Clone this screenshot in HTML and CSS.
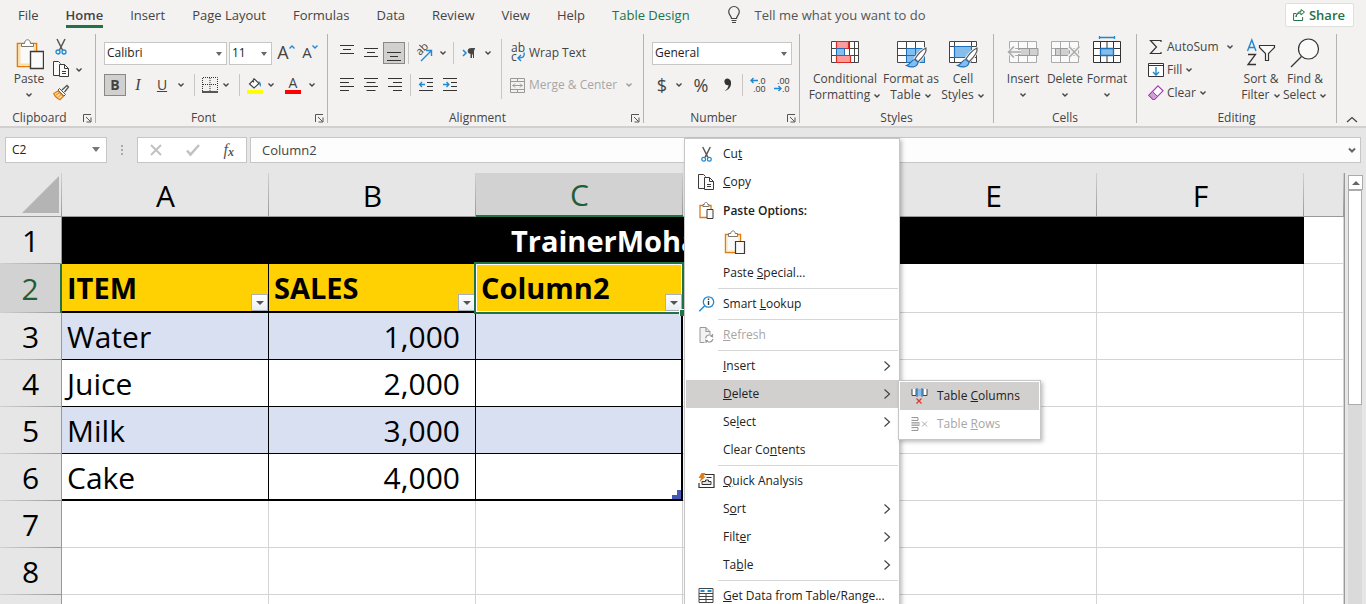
FILE: index.html
```html
<!DOCTYPE html>
<html lang="en">
<head>
<meta charset="utf-8">
<title>Workbook</title>
<link rel="stylesheet" href="styles.css">
</head>
<body>
<svg class="defs" aria-hidden="true">
  <symbol id="chev" viewBox="0 0 8 6"><path d="M1.5 1.5 4 4l2.5-2.5" fill="none" stroke="#444" stroke-width="1.4"/></symbol>
  <symbol id="launch" viewBox="0 0 9 9"><path d="M.5 8V.5H8M3 3l4.500 4.500M8 3.500V8H3.500" fill="none" stroke="#555"/></symbol>
  <symbol id="cut" viewBox="0 0 14 18"><path d="M3 1l5.500 11M11 1L5.500 12" fill="none" stroke="#555" stroke-width="1.500"/><circle cx="4" cy="14" r="2" fill="none" stroke="#1e88d2" stroke-width="1.300"/><circle cx="10" cy="14" r="2" fill="none" stroke="#1e88d2" stroke-width="1.300"/></symbol>
  <symbol id="copy" viewBox="0 0 17 17"><path d="M6 14.500H.5v-14h5l2 2" fill="#fafafa" stroke="#3b3a39"/><path d="M6.500 3.500h5l4 4v8h-9z" fill="#fafafa" stroke="#3b3a39"/><path d="M11.500 3.500v4h4M9 10.500h4M9 12.500h4" fill="none" stroke="#3b3a39"/></symbol>
  <symbol id="paste" viewBox="-2 0 30 32"><path d="M1.500 5.500h19v23h-19z" fill="#fff" stroke="#e07c13" stroke-width="1.600"/><path d="M3.500 7.500h15v19h-15z" fill="#fafafa" stroke="#fbe0a4" stroke-width="2"/><path d="M5.500 8.500v-3h3c0-5 6-5 6 0h3v3z" fill="#fff" stroke="#797774"/><path d="M14.500 13.500h13v17h-13z" fill="#fafafa" stroke="#3b3a39" stroke-width="1.400"/></symbol>
  <symbol id="paste-small" viewBox="0 0 16 17"><path d="M1.500 3.500h11v12h-11z" fill="#fff" stroke="#e07c13" stroke-width="1.300"/><path d="M4.500 4.500v-2h1.300c0-3 3.400-3 3.400 0h1.300v2z" fill="#fff" stroke="#797774"/><path d="M8.500 7.500h6v9h-6z" fill="#fafafa" stroke="#3b3a39"/></symbol>
  <symbol id="paste-mid" viewBox="0 0 22 25"><path d="M1.500 4.500h15v18h-15z" fill="#fff" stroke="#e07c13" stroke-width="1.400"/><path d="M3 6h12v15H3z" fill="#fafafa" stroke="#fbe0a4"/><path d="M4.500 6.500v-3h2.300c0-3.500 4.400-3.500 4.400 0h2.300v3z" fill="#fff" stroke="#797774"/><path d="M11.500 11.500h9v12h-9z" fill="#fafafa" stroke="#3b3a39" stroke-width="1.200"/></symbol>
  <symbol id="arrow" viewBox="0 0 8 10"><path d="M1.500 .5 6.500 5l-5 4.500" fill="none" stroke="#444" stroke-width="1.200"/></symbol>
</svg>

<header class="ribbon">
  <div class="topbar">
    <nav class="tabs">
      <a href="#">File</a><a href="#" class="on">Home</a><a href="#">Insert</a><a href="#">Page Layout</a><a href="#">Formulas</a><a href="#">Data</a><a href="#">Review</a><a href="#">View</a><a href="#">Help</a><a href="#" class="ctx">Table Design</a>
    </nav>
    <button class="tell"><svg width="12" height="18" viewBox="0 0 12 18"><path d="M3.500 12.500C3.500 10 .7 9 .7 5.800a5.300 5.300 0 0 1 10.600 0C11.300 9 8.500 10 8.500 12.500zM3.500 14.500h5M4 16.500h4" fill="none" stroke="#444" stroke-width="1.200"/></svg>Tell me what you want to do</button>
    <button class="share"><svg width="12" height="12" viewBox="0 0 12 12"><path d="M3 4.500H.6v7h9V8M3 8c.5-3 2-4 5-4V6l3.500-3L8 .6v2C5 2.600 3 4.500 3 8z" fill="none" stroke="#217346"/></svg>Share</button>
  </div>

  <div class="groups">
    <section class="group clipboard">
      <div class="body">
        <button class="big paste"><svg width="30" height="32"><use href="#paste"/></svg><span>Paste</span><svg class="chev"><use href="#chev"/></svg></button>
        <div class="stack">
          <button aria-label="Cut" class="cut"><svg width="14" height="18"><use href="#cut"/></svg></button>
          <button aria-label="Copy"><svg width="17" height="17"><use href="#copy"/></svg><svg class="chev"><use href="#chev"/></svg></button>
          <button aria-label="Format Painter"><svg width="17" height="17" viewBox="0 0 17 17"><path d="M9 6l5-4.500 1.500 1.500L11.500 8" fill="#fff" stroke="#555" stroke-width="1.300"/><path d="M6.500 4.500l6 6-1.500 1.500-6-6z" fill="#fff" stroke="#555"/><path d="M5 7L.8 9.500c1 3 3.500 5 6.200 6.200l3.500-3.400z" fill="#fbdda0" stroke="#e07c13" stroke-width="1.300"/><path d="M3 11l3-2M5 13.500l3-3" stroke="#e07c13"/></svg></button>
        </div>
      </div>
      <footer><span>Clipboard</span><button aria-label="Clipboard options"><svg width="9" height="9"><use href="#launch"/></svg></button></footer>
    </section>

    <section class="group font">
      <div class="body rows">
        <div class="row">
          <label class="drop w-name"><select aria-label="Font"><option>Calibri</option></select></label>
          <label class="drop w-size"><select aria-label="Font size"><option>11</option></select></label>
          <button class="ib grow" aria-label="Increase font size"><span>A</span><svg width="6" height="4" viewBox="0 0 6 4"><path d="M.5 3.500 3 1l2.500 2.500" fill="none" stroke="#1e88d2" stroke-width="1.300"/></svg></button>
          <button class="ib shrink" aria-label="Decrease font size"><span>A</span><svg width="6" height="4" viewBox="0 0 6 4"><path d="M.5 .5 3 3 5.500 .5" fill="none" stroke="#1e88d2" stroke-width="1.300"/></svg></button>
        </div>
        <div class="row">
          <button class="ib pressed"><b>B</b></button>
          <button class="ib italic"><i>I</i></button>
          <button class="ib"><u>U</u></button>
          <button class="cb" aria-label="Underline styles"><svg class="chev"><use href="#chev"/></svg></button>
          <i class="vsep"></i>
          <button class="ib tight" aria-label="Borders"><svg width="16" height="16" viewBox="0 0 16 16"><path d="M.5 14V.5h15V14M8 1v13M1 7.500h14" fill="none" stroke="#333" stroke-dasharray="1 1"/><path d="M0 15h16" stroke="#222" stroke-width="1.500"/></svg></button>
          <button class="cb" aria-label="Border styles"><svg class="chev"><use href="#chev"/></svg></button>
          <i class="vsep"></i>
          <button class="ib tight" aria-label="Fill color"><svg width="18" height="18" viewBox="0 0 18 18"><path d="M7.500 2.500v4M3.500 8l5-5 4.500 4.500-5 4.500z" fill="#fff" stroke="#444" stroke-width="1.200"/><path d="M12.500 5c2.500 1 3 3.500 2 6-1-2-1.500-3-2-6z" fill="#1e88d2"/><path d="M1 14h16v4H1z" fill="#ff0"/></svg></button>
          <button class="cb" aria-label="Fill colors"><svg class="chev"><use href="#chev"/></svg></button>
          <button class="ib color" aria-label="Font color"><span>A</span></button>
          <button class="cb" aria-label="Font colors"><svg class="chev"><use href="#chev"/></svg></button>
        </div>
      </div>
      <footer><span>Font</span><button aria-label="Font options"><svg width="9" height="9"><use href="#launch"/></svg></button></footer>
    </section>

    <section class="group align">
      <div class="body">
        <div class="rows">
          <div class="row">
            <button class="ib" aria-label="Top align"><svg width="14" height="16" viewBox="0 0 14 16"><path d="M0 .5h14M3 4.500h8M0 8.500h14" stroke="#333" stroke-width="1.200"/></svg></button>
            <button class="ib" aria-label="Middle align"><svg width="14" height="16" viewBox="0 0 14 16"><path d="M0 3.500h14M3 7.500h8M0 11.500h14" stroke="#333" stroke-width="1.200"/></svg></button>
            <button class="ib pressed" aria-label="Bottom align"><svg width="14" height="16" viewBox="0 0 14 16"><path d="M0 7.500h14M3 11.500h8M0 15.500h14" stroke="#333" stroke-width="1.200"/></svg></button>
            <i class="vsep"></i>
            <button class="ib" aria-label="Orientation"><svg width="18" height="18" viewBox="0 0 18 18"><text x="0" y="0" font-size="11" fill="#444" transform="translate(5 12) rotate(-45)">ab</text><path d="M6 17L16 7M11 6.500h5.500V12" fill="none" stroke="#1e88d2" stroke-width="1.400"/></svg></button>
            <button class="cb" aria-label="Orientation styles"><svg class="chev"><use href="#chev"/></svg></button>
            <i class="vsep"></i>
            <button class="ib" aria-label="Text direction"><svg width="14" height="10" viewBox="0 0 14 10"><path d="M1 2l3 3-3 3" fill="none" stroke="#1e88d2" stroke-width="1.500"/><path d="M13 .6H8.500a2.300 2.300 0 0 0 0 4.800H9V10M9.500 1v9M11.500 1v9" fill="#444" stroke="#444"/></svg></button>
            <button class="cb" aria-label="Text directions"><svg class="chev"><use href="#chev"/></svg></button>
          </div>
          <div class="row">
            <button class="ib" aria-label="Align left"><svg width="14" height="14" viewBox="0 0 14 14"><path d="M0 .5h14M0 4.500h9M0 8.500h14M0 12.500h9" stroke="#333" stroke-width="1.200"/></svg></button>
            <button class="ib" aria-label="Center"><svg width="14" height="14" viewBox="0 0 14 14"><path d="M0 .5h14M2.500 4.500h9M0 8.500h14M2.500 12.500h9" stroke="#333" stroke-width="1.200"/></svg></button>
            <button class="ib" aria-label="Align right"><svg width="14" height="14" viewBox="0 0 14 14"><path d="M0 .5h14M5 4.500h9M0 8.500h14M5 12.500h9" stroke="#333" stroke-width="1.200"/></svg></button>
            <i class="vsep"></i>
            <button class="ib" aria-label="Decrease indent"><svg width="14" height="14" viewBox="0 0 14 14"><path d="M0 .5h14M8 4.500h6M8 8.500h6M0 12.500h14" stroke="#333" stroke-width="1.200"/><path d="M6 6.500H.8M3 4L.6 6.500 3 9" fill="none" stroke="#1e88d2" stroke-width="1.300"/></svg></button>
            <button class="ib" aria-label="Increase indent"><svg width="14" height="14" viewBox="0 0 14 14"><path d="M0 .5h14M8 4.500h6M8 8.500h6M0 12.500h14" stroke="#333" stroke-width="1.200"/><path d="M0 6.500h5.500M3.500 4l2.400 2.500L3.500 9" fill="none" stroke="#1e88d2" stroke-width="1.300"/></svg></button>
          </div>
        </div>
        <i class="vline"></i>
        <div class="rows wrap">
          <button class="tb"><svg width="15" height="18" viewBox="0 0 15 18"><text x="1" y="8" font-size="12" fill="#444">ab</text><text x="1" y="17" font-size="12" fill="#444">c</text><path d="M14 8.500c1 4-1 5.500-5.500 5.500M11 11l-3 3 3 3" fill="none" stroke="#1e88d2" stroke-width="1.400"/></svg>Wrap Text</button>
          <button class="tb" disabled><svg width="15" height="15" viewBox="0 0 15 15"><path d="M.5 .5h14v14H.5zM.5 3.500h14M.5 11.500h14M7.500 .5v3M7.500 11.500v3M2.500 7.500h10M5 5.500l-2 2 2 2M10 5.500l2 2-2 2" fill="none" stroke="#999"/></svg>Merge &amp; Center <svg class="chev dim"><use href="#chev"/></svg></button>
        </div>
      </div>
      <footer><span>Alignment</span><button aria-label="Alignment options"><svg width="9" height="9"><use href="#launch"/></svg></button></footer>
    </section>

    <section class="group number">
      <div class="body rows">
        <div class="row"><label class="drop w-num"><select aria-label="Number format"><option>General</option></select></label></div>
        <div class="row">
          <button class="ib sym">$</button>
          <button class="cb" aria-label="Currency styles"><svg class="chev"><use href="#chev"/></svg></button>
          <button class="ib sym pct">%</button>
          <button class="ib comma" aria-label="Comma style"><svg width="9" height="14" viewBox="0 0 9 14"><path d="M4 .5A3 3 0 1 0 5.500 7C5.300 9.500 4 11.500 1.500 13 6 12 8.500 8.500 8 4 7.700 2 6 .5 4 .5z" fill="#333"/></svg></button>
          <i class="vsep"></i>
          <button class="ib dec" aria-label="Increase decimal"><svg width="16" height="16" viewBox="0 0 16 16"><path d="M8 3.500H1M3.500 1L1 3.500 3.500 6" fill="none" stroke="#1e88d2" stroke-width="1.400"/><text x="8" y="7">.0</text><text x="3" y="15">.00</text></svg></button>
          <button class="ib dec" aria-label="Decrease decimal"><svg width="16" height="16" viewBox="0 0 16 16"><path d="M0 11.500h7M4.500 9L7 11.500 4.500 14" fill="none" stroke="#1e88d2" stroke-width="1.400"/><text x="3" y="7">.00</text><text x="8" y="15">.0</text></svg></button>
        </div>
      </div>
      <footer><span>Number</span><button aria-label="Number options"><svg width="9" height="9"><use href="#launch"/></svg></button></footer>
    </section>

    <section class="group styles">
      <div class="body">
        <button class="big w-cond"><svg width="30" height="32" viewBox="0 0 30 32"><path d="M1.500 3.500h27v21h-27zM1.500 10.500h27M1.500 17.500h27M6.500 3.500v21M19.500 3.500v21M24.500 3.500v21" fill="#fff" stroke="#444"/><path d="M6.500 3.500h12v7h-12zM6.500 17.500h14v7h-14z" fill="#ff9a9a" stroke="#d92c20" stroke-width="1.200"/><path d="M6.500 10.500h8v7h-8z" fill="#83beec" stroke="#1e6fb8"/></svg><span>Conditional<br>Formatting <svg class="chev"><use href="#chev"/></svg></span></button>
        <button class="big w-fmt"><svg width="30" height="32" viewBox="0 0 30 32"><path d="M1.500 3.500h27v21h-27z" fill="#fff"/><path d="M10.500 10.500h18v14h-18z" fill="#83beec"/><path d="M1.500 3.500h27v21h-27zM1.500 10.500h27M1.500 17.500h27M10.500 3.500v21M19.500 3.500v21" fill="none" stroke="#444"/><path d="M10.500 10.500h18v14h-18zM10.500 17.500h18M19.500 10.500v14" fill="none" stroke="#1e6fb8"/><svg x="9" y="9" width="22" height="22" viewBox="0 0 22 22"><path d="M21 1c-4 2-8 6-11 11l3 3C17 11 22 5 21 1z" fill="#fff" stroke="#f3f2f1" stroke-width="3"/><path d="M21 1c-4 2-8 6-11 11l3 3C17 11 22 5 21 1z" fill="#fff" stroke="#555" stroke-width="1.200"/><path d="M10 12.500c-4 0-4 5-8.500 6 5 2.500 11 2 11.500-3.500z" fill="#83beec" stroke="#1e6fb8" stroke-width="1.200"/></svg></svg><span>Format as<br>Table <svg class="chev"><use href="#chev"/></svg></span></button>
        <button class="big w-cell"><svg width="30" height="32" viewBox="0 0 30 32"><path d="M1.500 3.500h27v21h-27zM1.500 8.500h27M1.500 19.500h27M6.500 3.500v21M23.500 3.500v21" fill="#fff" stroke="#444"/><path d="M6.500 8.500h17v11h-17z" fill="#83beec" stroke="#1e6fb8" stroke-width="1.200"/><svg x="8" y="9" width="22" height="22" viewBox="0 0 22 22"><path d="M21 1c-4 2-8 6-11 11l3 3C17 11 22 5 21 1z" fill="#fff" stroke="#f3f2f1" stroke-width="3"/><path d="M21 1c-4 2-8 6-11 11l3 3C17 11 22 5 21 1z" fill="#fff" stroke="#555" stroke-width="1.200"/><path d="M10 12.500c-4 0-4 5-8.500 6 5 2.500 11 2 11.500-3.500z" fill="#83beec" stroke="#1e6fb8" stroke-width="1.200"/></svg></svg><span>Cell<br>Styles <svg class="chev"><use href="#chev"/></svg></span></button>
      </div>
      <footer><span>Styles</span></footer>
    </section>

    <section class="group cells">
      <div class="body">
        <button class="big w-ins"><svg width="32" height="32" viewBox="0 0 32 32"><path d="M2.500 3.500h27v21h-27zM2.500 10.500h27M2.500 17.500h27M11.500 3.500v21M20.500 3.500v21" fill="#fafafa" stroke="#aaa"/><path d="M12 10.500h19v7H12zM22.500 10.500v7" fill="#d0d0d0" stroke="#999"/><path d="M14 14H2M7 9l-5 5 5 5" fill="none" stroke="#f3f2f1" stroke-width="4"/><path d="M14 14H1.500M7 8.500L1.500 14 7 19.500" fill="none" stroke="#aaa" stroke-width="1.500"/></svg><span>Insert</span><svg class="chev"><use href="#chev"/></svg></button>
        <button class="big w-ins"><svg width="32" height="32" viewBox="0 0 32 32"><path d="M2.500 3.500h27v21h-27zM2.500 10.500h27M2.500 17.500h27M11.500 3.500v21M20.500 3.500v21" fill="#fafafa" stroke="#aaa"/><path d="M6.500 10.500h14v7h-14zM11.500 10.500v7" fill="#d0d0d0" stroke="#999"/><path d="M20 9l10 10M30 9L20 19" fill="none" stroke="#f3f2f1" stroke-width="4"/><path d="M20 8.500L30.500 19.500M30.500 8.500L20 19.500" fill="none" stroke="#aaa" stroke-width="1.400"/></svg><span>Delete</span><svg class="chev"><use href="#chev"/></svg></button>
        <button class="big w-ins"><svg width="30" height="32" viewBox="0 0 30 32"><path d="M1.500 3.500h27v21h-27zM1.500 10.500h27M1.500 17.500h27M8.500 3.500v21M21.500 3.500v21M15 3.500v21" fill="#fff" stroke="#333"/><path d="M8.500 10.500h13v7h-13z" fill="#83beec" stroke="#1e6fb8" stroke-width="1.300"/><path d="M7.500 -.5h15M7.500 -2v3M22.500 -2v3" fill="none" stroke="#1e88d2" stroke-width="1.300"/></svg><span>Format</span><svg class="chev"><use href="#chev"/></svg></button>
      </div>
      <footer><span>Cells</span></footer>
    </section>

    <section class="group editing">
      <div class="body">
        <div class="stack text">
          <button><svg width="16" height="16" viewBox="0 0 16 16"><path d="M13 3V1.500H2.500L8.500 8l-6 6.500H13V13" fill="none" stroke="#333" stroke-width="1.200"/></svg>AutoSum <svg class="chev far"><use href="#chev"/></svg></button>
          <button><svg width="16" height="16" viewBox="0 0 16 16"><path d="M.5 1.500h15v13H.5zM.5 3.500h15" fill="#fff" stroke="#333"/><path d="M8 5v8M5 10l3 3 3-3" fill="none" stroke="#1e88d2" stroke-width="1.400"/></svg>Fill <svg class="chev"><use href="#chev"/></svg></button>
          <button><svg width="16" height="16" viewBox="0 0 16 16"><path d="M10 .8l5 5-8.500 8.700H5L.8 10.300z" fill="#fff" stroke="#a33ab0" stroke-width="1.200"/><path d="M4.500 6.500l5 5-3 3H5L.8 10.300z" fill="#d59bdb" stroke="#a33ab0"/></svg>Clear <svg class="chev"><use href="#chev"/></svg></button>
        </div>
        <button class="big w-find"><svg width="30" height="32" viewBox="0 0 30 32"><path d="M1.500 13L5.800 2 10 13M3 9.500h5.700" fill="none" stroke="#1e88d2" stroke-width="1.400"/><path d="M2 16.500h7.500L2 26.500h8" fill="none" stroke="#333" stroke-width="1.300"/><path d="M13.500 7.500h15v2l-6 6v7h-3v-7l-6-6z" fill="#fafafa" stroke="#333" stroke-width="1.200"/></svg><span>Sort &amp;<br>Filter <svg class="chev"><use href="#chev"/></svg></span></button>
        <button class="big w-find"><svg width="32" height="32" viewBox="0 0 32 32"><circle cx="19.500" cy="11" r="10" fill="#fafafa" stroke="#333" stroke-width="1.200"/><path d="M12.500 18.500L2 29" stroke="#333" stroke-width="1.300"/></svg><span>Find &amp;<br>Select <svg class="chev"><use href="#chev"/></svg></span></button>
      </div>
      <footer><span>Editing</span></footer>
    </section>
    <button class="collapse" aria-label="Collapse the ribbon"><svg width="12" height="7" viewBox="0 0 12 7"><path d="M1 6l5-4.500L11 6" fill="none" stroke="#444" stroke-width="1.300"/></svg></button>
  </div>
</header>

<div class="formula">
  <label class="drop cellref"><input value="C2" aria-label="Name box"></label>
  <i class="dots"></i>
  <div class="fbtns">
    <button aria-label="Cancel"><svg width="12" height="12" viewBox="0 0 12 12"><path d="M1 1l10 10M11 1L1 11" stroke="#c2c2c2" stroke-width="2"/></svg></button>
    <button aria-label="Enter"><svg width="14" height="12" viewBox="0 0 14 12"><path d="M1 6.500l3.500 4L13 1" fill="none" stroke="#c2c2c2" stroke-width="2.500"/></svg></button>
    <button class="fx"><i>f</i><i class="sub">x</i></button>
  </div>
  <div class="fbox"><input value="Column2" aria-label="Formula"><button aria-label="Expand formula bar"><svg width="8" height="7" viewBox="0 0 8 7"><path d="M1 1.500l3 3 3-3" fill="none" stroke="#666" stroke-width="2"/></svg></button></div>
</div>

<main class="work">
  <div class="sheet">
    <table>
      <colgroup><col class="c-head"><col class="c"><col class="c"><col class="c"><col class="c"><col class="c"><col class="c"><col></colgroup>
      <thead><tr class="letters"><th class="corner"><svg width="37" height="37" viewBox="0 0 37 37"><path d="M37 0v37H0z" fill="#b4b4b4"/></svg></th><th>A</th><th>B</th><th class="sel">C</th><th>D</th><th>E</th><th>F</th><th></th></tr></thead>
      <tbody>
        <tr><th>1</th><td class="title" colspan="6">TrainerMoha</td><td></td></tr>
        <tr class="two"><th class="sel">2</th><td class="hd">ITEM<button class="filter" aria-label="Filter ITEM"></button></td><td class="hd">SALES<button class="filter" aria-label="Filter SALES"></button></td><td class="hd active">Column2<button class="filter" aria-label="Filter Column2"></button></td><td></td><td></td><td></td><td></td></tr>
        <tr class="data band"><th>3</th><td>Water</td><td class="num">1,000</td><td class="edge"></td><td></td><td></td><td></td><td></td></tr>
        <tr class="data"><th>4</th><td>Juice</td><td class="num">2,000</td><td class="edge"></td><td></td><td></td><td></td><td></td></tr>
        <tr class="data band"><th>5</th><td>Milk</td><td class="num">3,000</td><td class="edge"></td><td></td><td></td><td></td><td></td></tr>
        <tr class="data last"><th>6</th><td>Cake</td><td class="num">4,000</td><td class="edge"><svg class="corner-mark" width="10" height="10" viewBox="0 0 10 10"><path d="M5 0h5v10H0V5h5z" fill="#4659b5"/></svg></td><td></td><td></td><td></td><td></td></tr>
        <tr><th>7</th><td></td><td></td><td></td><td></td><td></td><td></td><td></td></tr>
        <tr><th>8</th><td></td><td></td><td></td><td></td><td></td><td></td><td></td></tr>
        <tr><th></th><td></td><td></td><td></td><td></td><td></td><td></td><td></td></tr>
      </tbody>
    </table>
  </div>
  <div class="scroll"><button aria-label="Scroll up"></button><div class="thumb"></div></div>
</main>

<ul class="menu main-menu">
  <li><button><svg width="14" height="17"><use href="#cut"/></svg><span>Cu<u>t</u></span></button></li>
  <li><button><svg width="17" height="17"><use href="#copy"/></svg><span><u>C</u>opy</span></button></li>
  <li class="head"><svg width="16" height="17"><use href="#paste-small"/></svg><span>Paste Options:</span></li>
  <li class="opts"><button aria-label="Paste"><svg width="22" height="25"><use href="#paste-mid"/></svg></button></li>
  <li><button><i></i><span>Paste <u>S</u>pecial...</span></button></li>
  <li class="rule"></li>
  <li><button><svg width="16" height="16" viewBox="0 0 16 16"><circle cx="10" cy="6" r="5.200" fill="#fff" stroke="#1e88d2" stroke-width="1.300"/><path d="M6 10L.8 15.300" stroke="#1e88d2" stroke-width="1.400"/><path d="M10 2.500V4M10 5v4" stroke="#333" stroke-width="1.400"/></svg><span>Smart <u>L</u>ookup</span></button></li>
  <li class="rule"></li>
  <li><button disabled><svg width="16" height="17" viewBox="0 0 16 17"><path d="M6 15.500H1.500v-15h6l4 4V7" fill="#f3f3f3" stroke="#999"/><path d="M7.500 .5v4h4M7 11c1-3.500 5-4 7-1.500V7M14.500 9.500H12M14.500 12c-1 3.500-5 4-7 1.500V16M7 13.500h2.500" fill="none" stroke="#999" stroke-width="1.200"/></svg><span><u>R</u>efresh</span></button></li>
  <li class="rule"></li>
  <li><button><i></i><span><u>I</u>nsert</span><svg class="arrow"><use href="#arrow"/></svg></button></li>
  <li class="hover"><button><i></i><span><u>D</u>elete</span><svg class="arrow"><use href="#arrow"/></svg></button>
    <ul class="menu submenu">
      <li class="hover"><button><svg width="16" height="17" viewBox="0 0 16 17"><path d="M.5 1v6.500h4V1M11.500 1v6.500h4V1" fill="#fff" stroke="#444"/><path d="M5.500 1h5v7h-5z" fill="#83beec"/><path d="M5.500 0v9M10.500 0v9" stroke="#1e6fb8"/><path d="M5 10.500l5 5M10 10.500l-5 5" stroke="#e8372c" stroke-width="1.300"/></svg><span>Table <u>C</u>olumns</span></button></li>
      <li><button disabled><svg width="16" height="16" viewBox="0 0 16 16"><path d="M0 1.500h6.500v3H0M0 11.500h6.500v3H0" fill="#f6f6f6" stroke="#999"/><path d="M0 6h7l2 2-2 2H0z" fill="#ccc"/><path d="M0 6.500h8M0 9.500h8M10.500 5.500l5 5M15.500 5.500l-5 5" stroke="#aaa"/></svg><span>Table <u>R</u>ows</span></button></li>
    </ul>
  </li>
  <li><button><i></i><span>Se<u>l</u>ect</span><svg class="arrow"><use href="#arrow"/></svg></button></li>
  <li><button><i></i><span>Clear Co<u>n</u>tents</span></button></li>
  <li class="rule"></li>
  <li><button><svg width="16" height="16" viewBox="0 0 16 16"><path d="M6 1.500h9.500v13H.5V10M8 4.500h5" fill="#fff" stroke="#333" stroke-width="1.200"/><path d="M3.500 11.500h9v-3H10V7H7v1.500H3.500z" fill="#e3e3e3" stroke="#333"/><path d="M3 0h4L5 3.500h2.500L1 9l1.500-4H0z" fill="#e07c13"/></svg><span><u>Q</u>uick Analysis</span></button></li>
  <li><button><i></i><span>S<u>o</u>rt</span><svg class="arrow"><use href="#arrow"/></svg></button></li>
  <li><button><i></i><span>Filt<u>e</u>r</span><svg class="arrow"><use href="#arrow"/></svg></button></li>
  <li><button><i></i><span>Ta<u>b</u>le</span><svg class="arrow"><use href="#arrow"/></svg></button></li>
  <li class="rule"></li>
  <li><button><svg width="16" height="16" viewBox="0 0 16 16"><path d="M.5 .5h14v14H.5zM.5 5.500h14M.5 8.500h14M.5 11.500h14M7.500 5.500v9" fill="#fff" stroke="#444"/><path d="M2 3h4M9 3h4" stroke="#1e88d2" stroke-width="2"/></svg><span><u>G</u>et Data from Table/Range...</span></button></li>
</ul>
</body>
</html>
```

FILE: styles.css
```css
* { box-sizing: border-box; }
body {
  margin: 0;
  height: 100vh;
  overflow: hidden;
  display: flex;
  flex-direction: column;
  position: relative;
  background: #e6e6e6;
  color: #444;
  font: 12px/16px "Open Sans", "Noto Sans", sans-serif;
}
button, input, select { font: inherit; color: inherit; margin: 0; padding: 0; border: 0; background: none; border-radius: 0; }
button { display: flex; align-items: center; white-space: nowrap; }
svg { flex: none; display: block; overflow: visible; }
.defs { position: absolute; width: 0; height: 0; }
.chev { width: 8px; height: 6px; display: inline-block; }

/* Ribbon */
.ribbon { background: #f3f2f1; border-bottom: 2px solid #d2d0ce; flex: none; }
.topbar { display: flex; align-items: center; height: 32px; padding: 0 12px 2px 0; font-size: 13px; }
.tabs { display: flex; gap: 27px; padding-left: 18px; align-self: flex-start; }
.tabs a { color: #444; text-decoration: none; height: 28px; line-height: 30px; white-space: nowrap; }
.tabs .on { font-weight: 600; border-bottom: 3px solid #217346; }
.tabs .ctx { color: #217346; }
.tell { margin-left: 38px; gap: 15px; color: #555; }
.share { margin-left: auto; gap: 4px; height: 24px; padding: 0 8px 0 7px; background: #fff; border: 1px solid #e1dfdd; border-radius: 2px; color: #217346; font-weight: 600; }
.groups { display: flex; height: 94px; padding: 2px 0; }
.group { display: flex; flex-direction: column; border-right: 1px solid #b5b3b1; flex: none; height: 89px; }
.group .body { display: flex; flex: 1; }
.group footer { display: flex; align-items: center; height: 10px; text-align: center; }
.group footer span { flex: 1; }
.group footer button { width: 16px; height: 10px; padding-left: 4px; }
.clipboard { width: 96px; }
.font { width: 232px; }
.align { width: 316px; }
.number { width: 156px; }
.styles { width: 194px; }
.cells { width: 143px; }
.editing { width: 200px; }
.collapse { margin: auto 8px 0 auto; height: 10px; }

.big { flex-direction: column; text-align: center; padding-top: 4px; }
.big > svg:first-child { margin-bottom: 1px; }
.big > span { line-height: 16px; }
.big > .chev { margin-top: 5px; }
.paste { width: 34px; margin-left: 12px; }
.stack { display: flex; flex-direction: column; padding-top: 1px; margin-left: 7px; }
.stack button { height: 23px; gap: 5px; }
.stack .cut { padding-left: 1px; }
.stack.text { margin-left: 11px; width: 91px; }
.stack.text button { gap: 3px; }
.stack .far { margin-left: 4px; }
.w-cond { width: 76px; margin-left: 7px; }
.w-fmt { width: 56px; }
.w-cell { width: 48px; }
.w-ins { width: 42px; }
.cells .body { padding-left: 8px; }
.w-find { width: 44px; }

.rows { display: flex; flex-direction: column; gap: 10px; padding-top: 8px; }
.group .body.rows { padding-left: 8px; flex-direction: column; }
.row { display: flex; align-items: center; height: 22px; }
.ib { width: 24px; height: 22px; justify-content: center; font-size: 14px; flex: none; }
.ib.tight { width: 18px; }
.cb { width: 14px; height: 22px; justify-content: center; flex: none; }
.pressed { background: #d2d0ce; border: 1px solid #8a8886; width: 22px; }
.italic i { font-family: "Liberation Serif", serif; font-size: 16px; }
.grow, .shrink { align-items: flex-start; line-height: 20px; }
.grow { font-size: 18px; margin-left: 2px; }
.shrink { font-size: 15px; }
.grow svg, .shrink svg { margin-top: 3px; }
.ib.color { margin-left: 3px; }
.color span { border-bottom: 4px solid #f00; line-height: 14px; width: 16px; text-align: center; }
.vsep { width: 1px; height: 22px; background: #c8c6c4; margin: 0 6px; flex: none; }
.vline { width: 1px; height: 60px; background: #c8c6c4; margin: 5px 8px 0 6px; }
.drop { position: relative; display: flex; height: 23px; background: #fff; border: 1px solid #c8c6c4; }
.drop select, .drop input { appearance: none; width: 100%; padding: 0 14px 0 2px; color: #222; outline: 0; }
.drop::after { content: ""; position: absolute; right: 4px; top: 9px; border: 3px solid transparent; border-top: 4px solid #666; border-bottom: 0; pointer-events: none; }
.w-name { width: 123px; margin-right: 2px; }
.w-size { width: 43px; }
.w-num { width: 140px; }
.align .rows { padding-left: 7px; }
.align .row .vsep { margin: 0 3px; }
.align .wrap { padding-left: 0; }
.tb { height: 22px; gap: 4px; }
.tb:disabled, .menu button:disabled { color: #a8a6a4; }
.dim { opacity: .5; margin-left: 4px; }
.sym { font-size: 18px; width: 20px; }
.number .pct { width: 30px; }
.number .comma { width: 22px; }
.number .vsep { margin: 0 3px 0 4px; }
.dec text { fill: #444; font: 9px "Liberation Sans", sans-serif; }

/* Formula bar */
.formula { display: flex; align-items: center; height: 45px; padding: 0 5px 1px; flex: none; }
.cellref { width: 102px; height: 26px; }
.cellref::after { border-width: 5px 4px 0; border-top-color: #777; top: 9px; right: 6px; }
.cellref input { padding-left: 6px; }
.dots { width: 2px; height: 10px; margin: 0 14px; background: repeating-linear-gradient(#aaa 0 2px, transparent 2px 4px); }
.fbtns { display: flex; justify-content: space-around; width: 110px; height: 26px; background: #fff; border: 1px solid #c6c6c6; }
.fx { font: 16px "Liberation Serif", serif; color: #555; }
.fx .sub { font-size: 12px; font-weight: bold; padding-top: 4px; }
.fbox { flex: 1; display: flex; margin-left: 3px; height: 26px; background: #fdfdfd; border: 1px solid #c6c6c6; padding: 0 4px 0 11px; }
.fbox input { flex: 1; font-size: 13px; outline: 0; }

/* Grid */
.work { flex: 1; display: flex; min-height: 0; overflow: hidden; }
.sheet { flex: 1; min-width: 0; border-right: 1px solid #999; background: #fff; }
table { width: 100%; table-layout: fixed; border-collapse: separate; border-spacing: 0; color: #000; }
.c-head { width: 62px; }
.c { width: 207px; }
th, td { height: 47px; padding: 0; overflow: hidden; white-space: nowrap; }
th { font-size: 30px; line-height: 40px; font-weight: 400; background: linear-gradient(90deg, #d0d0d0, #999) bottom / 100% 1px no-repeat #e6e6e6; border-right: 1px solid #999; }
.letters th { height: 44px; padding-top: 2px; border-right: 0; border-bottom: 1px solid #999; background: linear-gradient(#d0d0d0, #999) right / 1px 100% no-repeat #e6e6e6; }
.letters .corner { padding: 0; vertical-align: bottom; }
.corner svg { margin: 0 0 3px 22px; }
th.sel { background-color: #d2d2d2; color: #1e5e3c; border-right: 2px solid #217346; }
.letters th.sel { border-right: 0; border-bottom: 2px solid #217346; background-color: #d2d2d2; }
td { border: solid #d4d4d4; border-width: 0 1px 1px 0; font-size: 29px; line-height: 40px; padding-left: 5px; position: relative; }
.title { background: #000; color: #fff; font-weight: 700; border: 0; padding-left: 449px; }
.two th, .two td { height: 49px; }
.hd { background: #ffd002; font-weight: 700; border-color: #000; border-bottom-width: 2px; }
.active { overflow: visible; z-index: 1; }
.active::before { content: ""; position: absolute; inset: -2px -2px -3px -2px; border: 2px solid #217346; box-shadow: inset 0 0 0 1px #fff; }
.active::after { content: ""; position: absolute; right: -3px; bottom: -5px; width: 5px; height: 6px; background: #217346; border: solid #fff; border-width: 1px 0 0 1px; }
.filter { position: absolute; right: 0; bottom: 0; width: 17px; height: 17px; background: linear-gradient(#fff, #e9edf3); border: 1px solid #a9b0ba; justify-content: center; }
.filter::after { content: ""; border: 4px solid transparent; border-top: 4px solid #555; border-bottom: 0; }
.data td { font-size: 30px; padding-top: 2px; }
.data td:nth-child(-n+4) { border-color: #000; }
.band td:nth-child(-n+4) { background: #d9e0f2; }
.data .edge { border-right-width: 2px; }
.last td:nth-child(-n+4) { border-bottom-width: 2px; }
.data .num { text-align: right; padding-right: 15px; }
.corner-mark { position: absolute; right: -1px; bottom: -1px; }
.scroll { width: 21px; padding: 2px 4px 0 3px; display: flex; flex-direction: column; background: linear-gradient(#dadada, #dadada) 3px 2px / 14px 100% no-repeat; }
.scroll button { width: 15px; height: 15px; background: #fff; border: 1px solid #ababab; justify-content: center; }
.scroll button::after { content: ""; border: 4px solid transparent; border-bottom: 4px solid #666; border-top: 0; }
.thumb { height: 215px; background: #fff; border: 1px solid #ababab; }

/* Menus */
.menu { list-style: none; margin: 0; padding: 1px; background: #fff; border: 1px solid #c6c6c6; box-shadow: 2px 2px 4px rgba(0, 0, 0, .25); color: #222; position: absolute; z-index: 2; }
.main-menu { left: 684px; top: 138px; width: 216px; }
.menu li { position: relative; }
.menu li > button, .menu .head { display: flex; align-items: center; width: 100%; height: 28px; padding: 0 7px 0 12px; text-align: left; }
.menu li > button > :first-child, .menu .head > :first-child { width: 17px; margin-right: 8px; }
.menu span { flex: 1; }
.menu .head { height: 29px; font-weight: 600; }
.menu .opts > button { height: 34px; padding-left: 38px; }
.menu .opts > button > svg { width: 22px; }
.menu .rule { height: 1px; margin: 1px 0 1px 32px; background: #d6d6d6; }
.menu .hover > button { background: #d2d0ce; }
.arrow { width: 8px; height: 10px; }
.submenu { left: 212px; top: 0; width: 143px; }
.menu .submenu li > button { padding-left: 11px; }
.menu .submenu li > button > :first-child { margin-right: 9px; }
```
